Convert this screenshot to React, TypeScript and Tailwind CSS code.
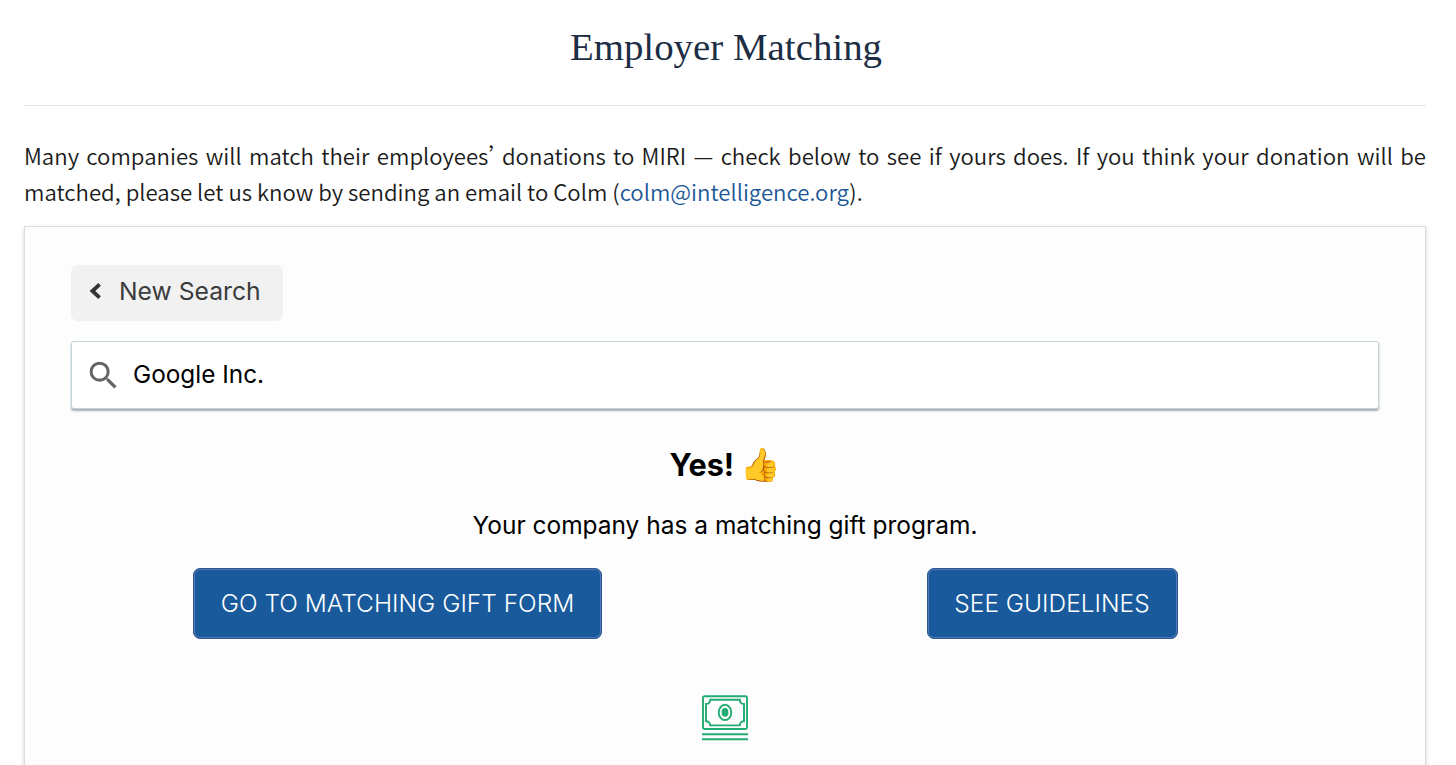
import React from 'react'
import { MdSearch } from 'react-icons/md'

interface ActionButtonProps {
  label: string
  className?: string
}

const ActionButton: React.FC<ActionButtonProps> = ({ label, className = '' }) => {
  return (
    <button
      className={`h-[71px] rounded-[7px] border border-[#2d5693] bg-[#185a9b] text-[24.5px] leading-[36px] font-[350] text-white whitespace-nowrap shadow-[inset_0_0_0_1px_#5279b3] pb-[1px] ${className}`}
    >
      {label}
    </button>
  )
}

const ChevronIcon: React.FC = () => (
  <svg width="12" height="16" viewBox="0 0 12 16" fill="none" stroke="#333" strokeWidth="3.8">
    <path d="M10.6 1.4 L3.4 8 L10.6 14.6" />
  </svg>
)

const MoneyIcon: React.FC = () => (
  <svg width="46" height="46" viewBox="0 0 46 46" fill="none" stroke="#22ab72" strokeWidth="1.9">
    <rect x="1" y="1.2" width="44" height="32.8" rx="1.5" />
    <path d="M8.2 4.8 H37.8 A4 4 0 0 0 42 9 V26.2 A4 4 0 0 0 37.8 30.4 H8.2 A4 4 0 0 0 4 26.2 V9 A4 4 0 0 0 8.2 4.8 Z" />
    <ellipse cx="23" cy="17.4" rx="6.3" ry="7.6" />
    <ellipse cx="23" cy="17.4" rx="3.4" ry="4.3" fill="#22ab72" stroke="none" />
    <path d="M0 39.2 H46 M0 44.3 H46" />
  </svg>
)

const MatchingPanel: React.FC = () => {
  return (
    <section className="h-[600px] border border-[#dcdde0] bg-[#fdfdfd] px-[46px] pt-[38px] font-['Inter',sans-serif] text-black shadow-[0_2px_4px_rgba(0,0,0,0.18)]">
      <button className="flex h-14 w-[212px] items-center rounded-[7px] bg-[#f1f1f1] pl-[18px] text-[#3c3c3c]">
        <span className="mb-1 block">
          <ChevronIcon />
        </span>
        <span className="mb-[4px] ml-[18px] text-[24.7px] leading-[36px] whitespace-nowrap">New Search</span>
      </button>

      <div className="mt-5 flex h-[68px] items-center rounded-[3px] border border-[#c5d3da] bg-white pl-[13px] shadow-[0_2px_2px_rgba(80,95,110,0.5)]">
        <MdSearch size={37} className="text-[#666]" />
        <span className="mb-[3px] ml-[11px] text-[24.35px] leading-[36px]">Google Inc.</span>
      </div>

      <h2 className="mt-[36px] flex h-10 items-center justify-center text-[30.6px] font-bold">
        Yes!
        <span className="ml-[6px] text-[32.5px] leading-[36px] font-normal font-['Noto_Color_Emoji']">👍</span>
      </h2>
      <p className="mt-[22px] text-center text-[24.47px] leading-[36px]">Your company has a matching gift program.</p>

      <div className="mt-[25px] grid grid-cols-2 justify-items-center">
        <ActionButton label="GO TO MATCHING GIFT FORM" className="mr-[1px] w-[409px]" />
        <ActionButton label="SEE GUIDELINES" className="w-[251px]" />
      </div>

      <div className="mt-[56px] flex justify-center">
        <MoneyIcon />
      </div>
    </section>
  )
}

const App: React.FC = () => {
  return (
    <main className="h-[765px] overflow-hidden bg-white pr-[30px] pl-6">
      <header className="flex h-[106px] justify-center border-b border-[#e6e6e6] pt-[24px] pl-[2px]">
        <h1 className="font-['Liberation_Serif',serif] text-[38.9px] leading-[46px] text-[#1c2d44]">Employer Matching</h1>
      </header>

      <p className="mt-[31px] mb-[17px] text-justify font-['Noto_Sans_CJK_SC',sans-serif] text-[22.2px] leading-[36px] font-[350] text-[#1a1a1a]">
        Many companies will match their employees<span className="tracking-[-16px]">’</span> donations to MIRI — check below to see if yours does. If you think your donation will be matched, please let us know by sending an email to Colm (<a className="text-[#1c5796]">colm@intelligence.org</a>).
      </p>

      <MatchingPanel />
    </main>
  )
}

export default App
